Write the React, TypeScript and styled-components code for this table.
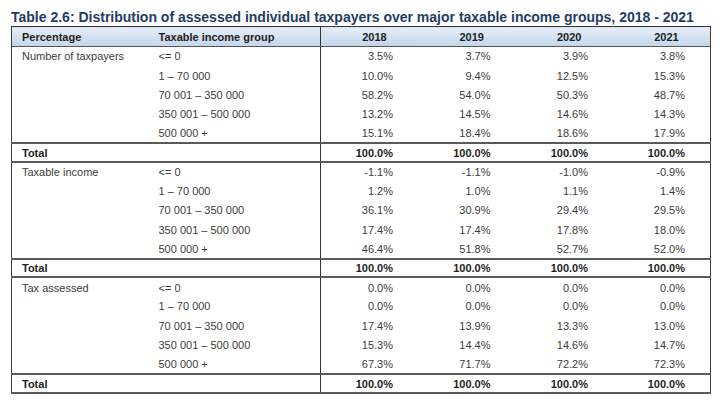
import React from 'react';
import styled, { createGlobalStyle } from 'styled-components';

const GlobalStyle = createGlobalStyle`
  html, body {
    margin: 0;
    padding: 0;
    background: #ffffff;
    font-family: "Liberation Sans", Arial, sans-serif;
  }
`;

const Page = styled.div`
  width: 720px;
  height: 403px;
  padding: 8px 0 0 11px;
  box-sizing: border-box;
  overflow: hidden;
`;

const Title = styled.h1`
  margin: 0;
  font-size: 14px;
  line-height: 18px;
  font-weight: bold;
  color: #1f3d66;
  white-space: nowrap;
`;

const Table = styled.table`
  width: 699px;
  border-collapse: collapse;
  table-layout: fixed;
  border: 1.5px solid #3a3a3a;
  font-size: 11px;
  color: #3c3c3c;
`;

const HeadCell = styled.th<{ $align?: 'left' | 'center' }>`
  height: 19px;
  padding: 0 0 0 10px;
  text-align: ${(p) => p.$align || 'left'};
  font-weight: bold;
  color: #1e1e1e;
  background: linear-gradient(#e6eef8, #c3d5eb);
  border-bottom: 1.5px solid #555;
  &:nth-child(2) {
    border-right: 1px solid #333;
  }
`;

const Row = styled.tr<{ $total?: boolean }>`
  height: ${(p) => (p.$total ? '18.5px' : '19.4px')};
  ${(p) =>
    p.$total &&
    `
    border-top: 2px solid #5a5a5a;
    border-bottom: 2px solid #5a5a5a;
    font-weight: bold;
    color: #1e1e1e;
  `}
`;

const Cell = styled.td<{ $num?: boolean; $divider?: boolean }>`
  padding: ${(p) => (p.$num ? '0 25px 0 0' : '0 0 0 10px')};
  text-align: ${(p) => (p.$num ? 'right' : 'left')};
  white-space: nowrap;
  border-right: ${(p) => (p.$divider ? '1px solid #333' : 'none')};
`;

type Block = {
  label: string;
  values: string[][];
};

const groups = ['<= 0', '1 – 70 000', '70 001 – 350 000', '350 001 – 500 000', '500 000 +'];
const years = ['2018', '2019', '2020', '2021'];

const blocks: Block[] = [
  {
    label: 'Number of taxpayers',
    values: [
      ['3.5%', '3.7%', '3.9%', '3.8%'],
      ['10.0%', '9.4%', '12.5%', '15.3%'],
      ['58.2%', '54.0%', '50.3%', '48.7%'],
      ['13.2%', '14.5%', '14.6%', '14.3%'],
      ['15.1%', '18.4%', '18.6%', '17.9%'],
    ],
  },
  {
    label: 'Taxable income',
    values: [
      ['-1.1%', '-1.1%', '-1.0%', '-0.9%'],
      ['1.2%', '1.0%', '1.1%', '1.4%'],
      ['36.1%', '30.9%', '29.4%', '29.5%'],
      ['17.4%', '17.4%', '17.8%', '18.0%'],
      ['46.4%', '51.8%', '52.7%', '52.0%'],
    ],
  },
  {
    label: 'Tax assessed',
    values: [
      ['0.0%', '0.0%', '0.0%', '0.0%'],
      ['0.0%', '0.0%', '0.0%', '0.0%'],
      ['17.4%', '13.9%', '13.3%', '13.0%'],
      ['15.3%', '14.4%', '14.6%', '14.7%'],
      ['67.3%', '71.7%', '72.2%', '72.3%'],
    ],
  },
];

const App: React.FC = () => {
  return (
    <Page>
      <GlobalStyle />
      <Title>
        Table 2.6: Distribution of assessed individual taxpayers over major taxable income groups, 2018 - 2021
      </Title>
      <Table>
        <colgroup>
          <col style={{ width: 137 }} />
          <col style={{ width: 172 }} />
          <col style={{ width: 97.5 }} />
          <col style={{ width: 97.5 }} />
          <col style={{ width: 97.5 }} />
          <col style={{ width: 97.5 }} />
        </colgroup>
        <thead>
          <tr>
            <HeadCell>Percentage</HeadCell>
            <HeadCell>Taxable income group</HeadCell>
            {years.map((y) => (
              <HeadCell key={y} $align="center">
                {y}
              </HeadCell>
            ))}
          </tr>
        </thead>
        <tbody>
          {blocks.map((block) => (
            <React.Fragment key={block.label}>
              {block.values.map((vals, i) => (
                <Row key={groups[i]}>
                  <Cell>{i === 0 ? block.label : ''}</Cell>
                  <Cell $divider>{groups[i]}</Cell>
                  {vals.map((v, j) => (
                    <Cell key={j} $num>
                      {v}
                    </Cell>
                  ))}
                </Row>
              ))}
              <Row $total>
                <Cell>Total</Cell>
                <Cell $divider />
                {years.map((y) => (
                  <Cell key={y} $num>
                    100.0%
                  </Cell>
                ))}
              </Row>
            </React.Fragment>
          ))}
        </tbody>
      </Table>
    </Page>
  );
};

export default App;
